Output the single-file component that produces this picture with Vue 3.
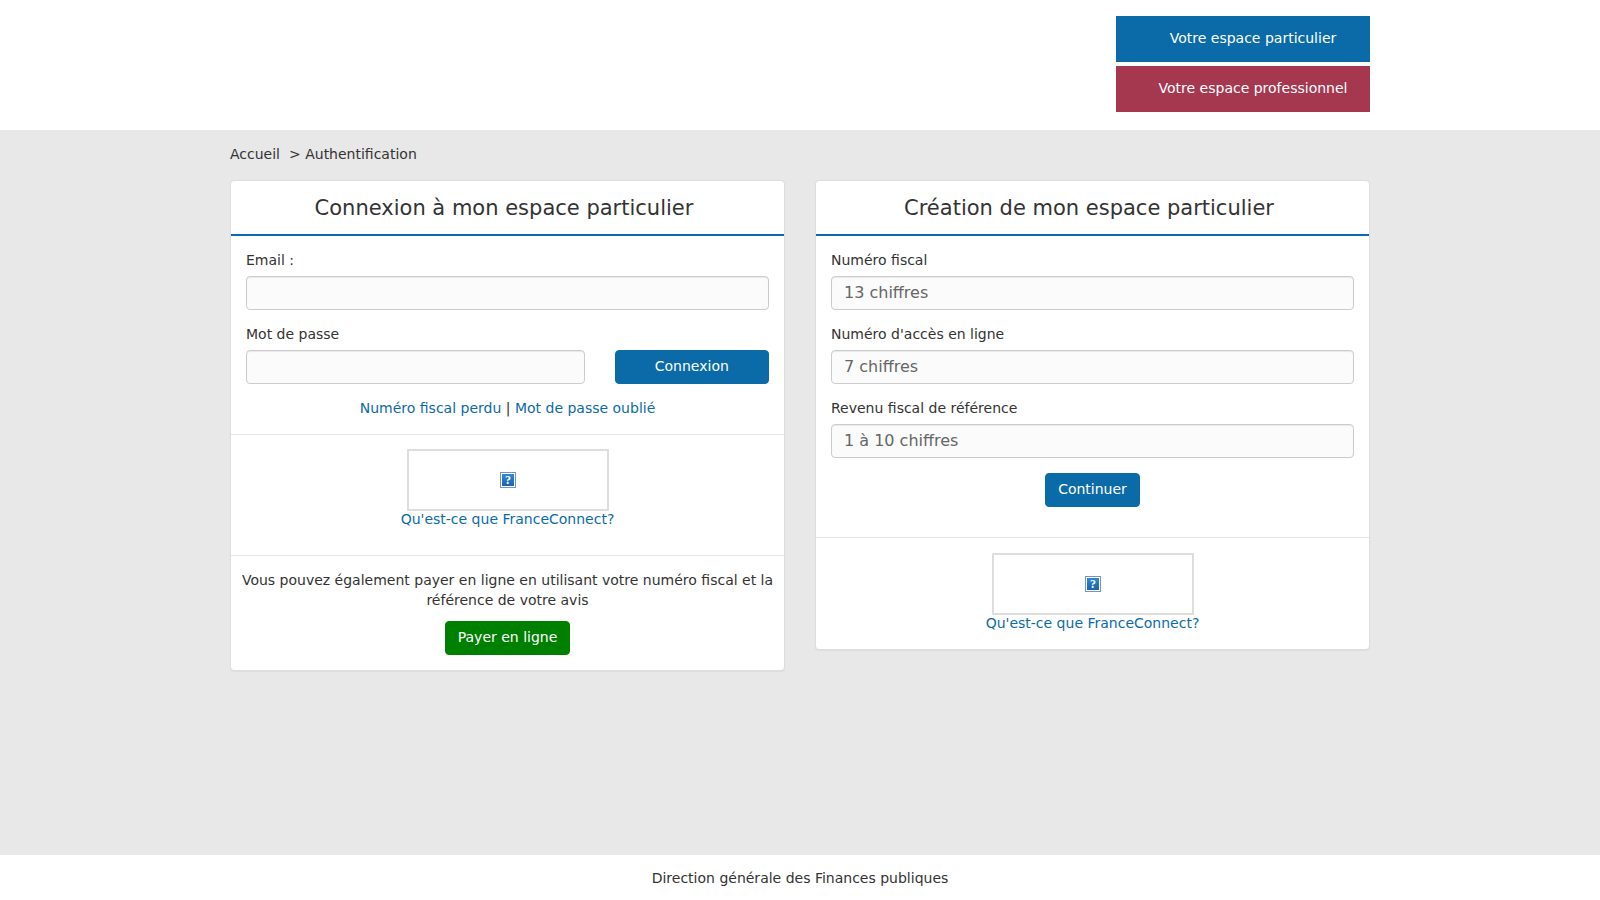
<script setup>
const fiscalFields = [
  { id: 'spi', label: 'Numéro fiscal', placeholder: '13 chiffres' },
  { id: 'access', label: "Numéro d'accès en ligne", placeholder: '7 chiffres' },
  { id: 'income', label: 'Revenu fiscal de référence', placeholder: '1 à 10 chiffres' },
]
</script>

<template>
  <div class="page">
    <header class="header">
      <nav class="container spaces">
        <a href="#" class="space space-personal">Votre espace particulier</a>
        <a href="#" class="space space-business">Votre espace professionnel</a>
      </nav>
    </header>

    <main class="main container">
      <nav class="breadcrumb">
        <a href="#">Accueil</a>
        <span>&gt; Authentification</span>
      </nav>

      <div class="panels">
        <section class="panel">
          <h1 class="panel-title">Connexion à mon espace particulier</h1>
          <form class="panel-body" @submit.prevent>
            <div class="field">
              <label for="email">Email :</label>
              <input id="email" type="text" />
            </div>
            <div class="login-row">
              <div class="field">
                <label for="password">Mot de passe</label>
                <input id="password" type="password" />
              </div>
              <div class="login-action">
                <button type="submit" class="btn btn-block">Connexion</button>
              </div>
            </div>
            <p class="help">
              <a href="#">Numéro fiscal perdu</a> | <a href="#">Mot de passe oublié</a>
            </p>
          </form>
          <div class="panel-body connect connect-tall">
            <a href="#" class="connect-image" aria-label="FranceConnect">
              <svg width="16" height="16" viewBox="0 0 16 16">
                <defs>
                  <linearGradient id="tile" x1="0" y1="0" x2="0" y2="1">
                    <stop offset="0" stop-color="#2f8bd0" />
                    <stop offset="1" stop-color="#1e62ab" />
                  </linearGradient>
                </defs>
                <rect x="0.5" y="0.5" width="15" height="15" fill="#fff" stroke="#7295c8" />
                <rect x="2" y="2" width="12" height="12" fill="url(#tile)" />
                <text x="8" y="12" class="mark">?</text>
              </svg>
            </a>
            <a href="#">Qu'est-ce que FranceConnect?</a>
          </div>
          <div class="panel-body pay">
            <p>Vous pouvez également payer en ligne en utilisant votre numéro fiscal et la référence de votre avis</p>
            <button type="button" class="btn btn-pay">Payer en ligne</button>
          </div>
        </section>

        <section class="panel">
          <h1 class="panel-title">Création de mon espace particulier</h1>
          <form class="panel-body create" @submit.prevent>
            <div v-for="field in fiscalFields" :key="field.id" class="field">
              <label :for="field.id">{{ field.label }}</label>
              <input :id="field.id" type="text" :placeholder="field.placeholder" />
            </div>
            <button type="submit" class="btn">Continuer</button>
          </form>
          <div class="panel-body connect">
            <a href="#" class="connect-image" aria-label="FranceConnect">
              <svg width="16" height="16" viewBox="0 0 16 16">
                <rect x="0.5" y="0.5" width="15" height="15" fill="#fff" stroke="#7295c8" />
                <rect x="2" y="2" width="12" height="12" fill="url(#tile)" />
                <text x="8" y="12" class="mark">?</text>
              </svg>
            </a>
            <a href="#">Qu'est-ce que FranceConnect?</a>
          </div>
        </section>
      </div>
    </main>

    <footer class="footer">Direction générale des Finances publiques</footer>
  </div>
</template>

<style>
body {
  margin: 0;
  background: #e8e8e8;
}
</style>

<style scoped>
* {
  box-sizing: border-box;
}
.page {
  min-height: 100vh;
  display: flex;
  flex-direction: column;
  font: 14px/20px "DejaVu Sans", sans-serif;
  color: #333;
}
.container {
  width: 100%;
  max-width: 1170px;
  margin: 0 auto;
  padding: 0 15px;
}
a {
  color: #0b6ba8;
  text-decoration: none;
}
p {
  margin: 0;
}
.header {
  background: #fff;
  padding: 16px 0 18px;
}
.spaces {
  display: flex;
  flex-direction: column;
  align-items: flex-end;
  gap: 4px;
}
.space {
  width: 254px;
  padding: 12px 0 14px 20px;
  color: #fff;
  text-align: center;
}
.space-personal {
  background: #0b6ba8;
}
.space-business {
  background: #a5384f;
}
.main {
  flex: 1;
}
.breadcrumb {
  display: flex;
  gap: 9px;
  padding: 14px 0 16px;
}
.breadcrumb a {
  color: #333;
}
.panels {
  display: grid;
  grid-template-columns: 1fr 1fr;
  align-items: start;
  gap: 30px;
  padding-bottom: 20px;
}
.panel {
  background: #fff;
  border: 1px solid #ddd;
  border-radius: 4px;
  box-shadow: 0 1px 1px rgba(0, 0, 0, 0.05);
}
.panel-title {
  margin: 0;
  padding: 16px 22px 14px 15px;
  border-bottom: 2px solid #0b6ba8;
  font-size: 21px;
  line-height: 23px;
  font-weight: 400;
  text-align: center;
}
.panel-body {
  padding: 14px 15px 16px;
}
.panel-body + .panel-body {
  border-top: 1px solid #e5e5e5;
}
.field {
  display: flex;
  flex-direction: column;
  gap: 6px;
  margin-bottom: 14px;
}
.field input {
  width: 100%;
  height: 34px;
  padding: 5px 12px 7px;
  border: 1px solid #ccc;
  border-radius: 4px;
  background: #fbfbfb;
  box-shadow: inset 0 1px 1px rgba(0, 0, 0, 0.075);
  font: 16px/20px "DejaVu Sans", sans-serif;
  color: #333;
}
.field input::placeholder {
  color: #666;
  opacity: 1;
}
.login-row {
  display: grid;
  grid-template-columns: 2fr 1fr;
  align-items: end;
  margin: 0 -15px;
}
.login-row > .field {
  margin-bottom: 0;
  padding: 0 15px;
}
.login-action {
  padding: 0 15px;
}
.btn {
  height: 34px;
  padding: 6px 12px 8px;
  border: 1px solid #0b6ba8;
  border-radius: 4px;
  background: #0b6ba8;
  color: #fff;
  font: 14px/18px "DejaVu Sans", sans-serif;
}
.btn-block {
  display: block;
  width: 100%;
}
.btn-pay {
  border-color: #008000;
  background: #008000;
}
.help {
  margin-top: 14px;
  text-align: center;
}
.connect {
  display: flex;
  flex-direction: column;
  align-items: center;
  padding: 15px 15px 18px;
  line-height: 16px;
}
.connect-tall {
  padding-top: 14px;
  padding-bottom: 28px;
}
.connect-image {
  display: flex;
  align-items: center;
  justify-content: center;
  width: 202px;
  height: 62px;
  border: 2px solid #ddd;
  border-radius: 1px;
}
.mark {
  fill: #fff;
  font: bold 12px "Liberation Serif", serif;
  text-anchor: middle;
}
.pay {
  display: flex;
  flex-direction: column;
  align-items: center;
  gap: 11px;
  padding: 14px 10px 15px;
  text-align: center;
}
.create {
  display: flex;
  flex-direction: column;
  padding-bottom: 30px;
}
.create .btn {
  align-self: center;
  margin-top: 1px;
}
.footer {
  padding: 13px 15px 12px;
  background: #fff;
  text-align: center;
}
</style>
